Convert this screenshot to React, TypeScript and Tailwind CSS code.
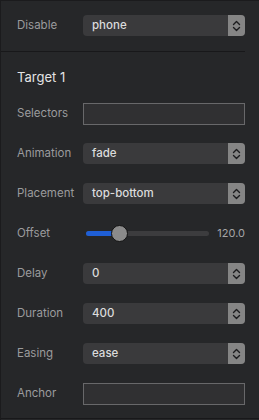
import React from "react";

function Arrows() {
  return (
    <svg width="9" height="12" viewBox="0 0 9 12" fill="none" stroke="#1c1c1e" strokeWidth="1.4" strokeLinecap="round" strokeLinejoin="round">
      <path d="M1.5 4.5 L4.5 1.5 L7.5 4.5" />
      <path d="M1.5 7.5 L4.5 10.5 L7.5 7.5" />
    </svg>
  );
}

function Label({ children }: { children: React.ReactNode }) {
  return <div className="w-[82px] shrink-0 pl-[16px] text-[11.5px] text-[#9b9b9d]">{children}</div>;
}

function Select({ value }: { value: string }) {
  return (
    <div className="flex h-[21px] w-[162px] items-center rounded-[4px] bg-[#3a3a3c]">
      <span className="flex-1 pl-[9px] text-[11.5px] font-medium text-[#dcdcdc]">{value}</span>
      <span className="flex h-full w-[17px] items-center justify-center rounded-r-[4px] bg-[#858585]">
        <Arrows />
      </span>
    </div>
  );
}

function Input() {
  return <div className="h-[22px] w-[162px] border border-[#68686a] bg-[#303032]" />;
}

function Row({ label, children }: { label: string; children: React.ReactNode }) {
  return (
    <div className="flex h-[21px] items-center">
      <Label>{label}</Label>
      {children}
    </div>
  );
}

export default function App() {
  return (
    <div
      className="flex h-[420px] w-[259px] flex-col overflow-hidden border-t border-l border-[#1b1b1d] bg-[#262729]"
      style={{ fontFamily: "Inter, 'Noto Sans', sans-serif" }}
    >
      <div className="pt-[14px]">
        <Row label="Disable">
          <Select value="phone" />
        </Row>
      </div>
      <div className="mt-[15px] mr-[14px] h-px bg-[#18181a]" />

      <div className="mt-[16px] pl-[16px] text-[13px] leading-[18px] text-[#e4e4e4]">Target 1</div>

      <div className="mt-[17px] flex flex-col gap-[19px]">
        <Row label="Selectors">
          <Input />
        </Row>
        <Row label="Animation">
          <Select value="fade" />
        </Row>
        <Row label="Placement">
          <Select value="top-bottom" />
        </Row>
        <Row label="Offset">
          <div className="flex w-[162px] items-center">
            <div className="relative ml-[3px] h-[5px] w-[123px] rounded-full bg-[#3c3c3e]">
              <div className="h-full w-[30px] rounded-full bg-[#1f5fd6]" />
              <div className="absolute top-[-6px] left-[25px] h-[17px] w-[17px] rounded-full border border-[#111] bg-[#8b8b8b]" />
            </div>
            <span className="ml-auto text-[11px] text-[#a5a5a7]">120.0</span>
          </div>
        </Row>
        <Row label="Delay">
          <Select value="0" />
        </Row>
        <Row label="Duration">
          <Select value="400" />
        </Row>
        <Row label="Easing">
          <Select value="ease" />
        </Row>
        <Row label="Anchor">
          <Input />
        </Row>
      </div>
      <div className="mt-auto mb-[1px] h-px bg-[#18181a]" />
    </div>
  );
}
